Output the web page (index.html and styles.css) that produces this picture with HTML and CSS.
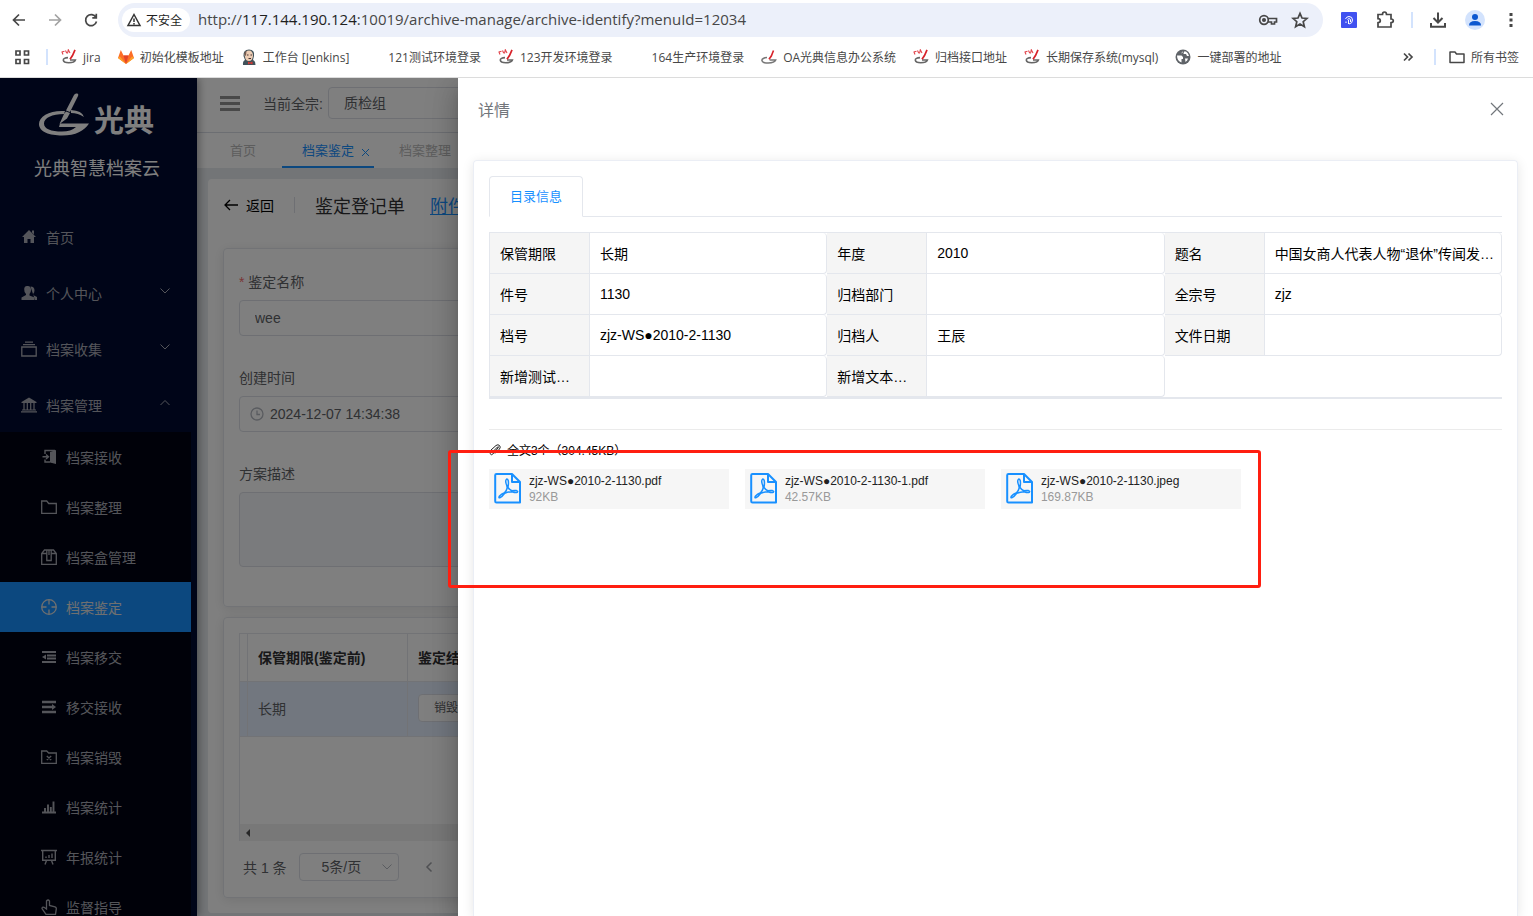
FILE: index.html
```html
<!DOCTYPE html>
<html lang="zh-CN">
<head>
    <meta charset="UTF-8">
    <title>光典智慧档案云</title>
    <link rel="stylesheet" href="styles.css">
</head>
<body>
    <svg class="sprite" aria-hidden="true">
        <symbol id="i-pen" viewBox="0 0 16 16">
            <path d="M6 8.6C3 8.8.8 9.8.9 11.3c.2 1.700 3 2.700 6.300 2.700 3.800 0 6.800-1.100 7.500-2.900H8.600" fill="none" stroke="#777" stroke-width="1.500"/>
            <path d="M12.500 1.500 10.300 7 8 10.300" fill="none" stroke="#d8222a" stroke-width="1.600"/>
        </symbol>
        <symbol id="i-pen2" viewBox="0 0 16 16">
            <path d="M7 8.600c-3 .2-4.800 1-4.700 2.500.2 1.600 2.500 2.600 5.500 2.600 3.500 0 6-1 6.600-2.700H9" fill="none" stroke="#666" stroke-width="1.600"/>
            <path d="M14 .8 11.500 6.500 9 10.300" fill="none" stroke="#d8222a" stroke-width="1.700"/>
            <path d="M.8 2.500 2 5.500M1 3l2.500-.8M4.500 1.500 5.800 4.300M6.500 4.500 7.300.8 9 4" fill="none" stroke="#e2444b" stroke-width="1.100"/>
        </symbol>
        <symbol id="i-pdf" viewBox="0 0 28 32">
            <path d="M2.500 1H18L26 9V29.500H2.500Q1.200 29.500 1.200 28.200V2.300Q1.200 1 2.500 1ZM18 1V9H26" fill="none" stroke="#1890ff" stroke-width="2" stroke-linejoin="round"/>
            <path d="M12.700 6q-1.700 1.200-.5 4.700.9 2.300 1 4.300-.6 2.800-2.700 4.800-3 1-5.200 3.500-.9 1.600.5 1.500 2.200-.8 4.900-4.500 3.800-1.600 7.600-1.600 3.200 1.300 5 .6 1-1.200-.8-1.700-2.200-.3-4.700.2-2.500-1-3.800-3.400.8-4.300.2-6.900-.5-1.600-1.500-1.500Z" fill="none" stroke="#1890ff" stroke-width="1.500" stroke-linejoin="round"/>
        </symbol>
        <symbol id="i-down" viewBox="0 0 12 12"><path d="M1.500 3.500 6 8l4.500-4.500" fill="none" stroke="currentColor"/></symbol>
        <symbol id="i-up" viewBox="0 0 12 12"><path d="M1.500 8 6 3.500 10.500 8" fill="none" stroke="currentColor"/></symbol>
    </svg>

    <header class="browser">
        <div class="toolbar">
            <button class="tool" aria-label="后退"><svg width="18" height="18" viewBox="0 0 18 18"><path d="M15 9H4M9 3.500 3.500 9 9 14.500"/></svg></button>
            <button class="tool tool-off" aria-label="前进"><svg width="18" height="18" viewBox="0 0 18 18"><path d="M3 9h11M9 3.500 14.500 9 9 14.500"/></svg></button>
            <button class="tool" aria-label="刷新"><svg width="18" height="18" viewBox="0 0 18 18"><path d="M14 6.500A5.500 5.500 0 1 0 14.500 10.500M14.300 2.800v4H10.300"/></svg></button>
            <div class="address">
                <button class="chip">
                    <svg width="16" height="16" viewBox="0 0 16 16"><path d="M8 2.500 14 13.500H2ZM8 6.500v3.500M8 11v1.500" fill="none" stroke="#333" stroke-width="1.500"/></svg>
                    不安全
                </button>
                <div class="url" role="textbox" aria-label="地址">http://<b>117.144.190.124</b>:10019/archive-manage/archive-identify?menuId=12034</div>
                <button class="tool" aria-label="密码"><svg width="20" height="18" viewBox="0 0 20 18"><circle cx="6" cy="9" r="4.300"/><circle cx="6" cy="9" r="1.200" fill="#474747"/><path d="M10 7.500h8.500v3.500h-2v2h-3v-2H10"/></svg></button>
                <button class="tool" aria-label="收藏"><svg width="18" height="18" viewBox="0 0 18 18"><path d="m9 2.300 2 4.700 5 .4-3.800 3.300 1.200 5L9 13l-4.400 2.700 1.200-5L2 7.400l5-.4Z"/></svg></button>
            </div>
            <button class="tool" aria-label="扩展应用"><svg width="16" height="16" viewBox="0 0 16 16"><rect width="16" height="16" rx="1" fill="#4051f0" stroke="none"/><path d="M4.500 7Q5.500 4.500 8 4.500 11.500 4.500 11.500 8T8 12M6.500 7.500Q8 5.500 9.500 7.500V10M7.500 8v4M5 9.500v1.500" stroke="#fff" stroke-width="1"/></svg></button>
            <button class="tool" aria-label="扩展程序"><svg width="20" height="20" viewBox="0 0 20 20"><path d="M3 4.500h4.500Q7.500 2 9.500 2t2 2.500H16V9q2.300 0 2.300 1.800T16 12.700V17H3v-4.300q2.300-.1 2.300-2T3 8.700Z"/></svg></button>
            <i class="bar"></i>
            <button class="tool" aria-label="下载"><svg width="18" height="18" viewBox="0 0 18 18"><path d="M9 1.500v9.500M4.500 7 9 11.500 13.500 7M2 12v3.700h14V12" stroke-width="2"/></svg></button>
            <button class="tool" aria-label="用户"><svg width="20" height="20" viewBox="0 0 20 20"><circle cx="10" cy="10" r="10" fill="#d3e3fd" stroke="none"/><circle cx="10" cy="7" r="3" fill="#0b57d0" stroke="none"/><path d="M4 15.500Q4 11 10 11t6 4.500Z" fill="#0b57d0" stroke="none"/></svg></button>
            <button class="tool tool-more" aria-label="菜单"><svg width="6" height="18" viewBox="0 0 6 18"><path d="M3 2v3M3 7.500v3M3 13v3" stroke-width="3"/></svg></button>
        </div>
        <nav class="bookmarks">
            <button class="tool" aria-label="应用"><svg width="16" height="16" viewBox="0 0 16 16"><path d="M2 2h4v4H2ZM10.500 2h4v4h-4ZM2 10.500h4v4H2ZM10.500 10.500h4v4h-4Z"/></svg></button>
            <i class="bar"></i>
            <a href="#"><svg class="fav"><use href="#i-pen2"/></svg>jira</a>
            <a href="#"><svg class="fav" viewBox="0 0 16 16"><path d="M0 9 2.800 1 5.500 6.500h5L13.200 1 16 9l-8 6Z" fill="#fc6d26"/><path d="M5.500 6.500h5L8 15Z" fill="#e24329"/><path d="m0 9 8 6L2 7.500ZM16 9l-8 6 6-7.500Z" fill="#fca326"/></svg>初始化模板地址</a>
            <a href="#"><svg class="fav" viewBox="0 0 16 16"><path d="M2 16q-.5-4 2-5L2.500 7Q2 .5 8 .5T13 7l-1 4q2.500 1 2.500 5Z" fill="#41525a"/><path d="M3.500 6Q4 1.500 8 1.500T12 7q-.5 5-4 5T4 8Z" fill="#edcdb4"/><path d="M3.500 6Q3 3 5.500 1.800L5 7Z" fill="#775c50"/><path d="M6 6h1.500M9.500 6H11M7.500 9.500H10" stroke="#433" fill="none"/><path d="m7 12.500 2 1 2.500-1v3l-2.500-1-2 1Z" fill="#d33833"/></svg>工作台 [Jenkins]</a>
            <a href="#"><svg class="fav"></svg>121测试环境登录</a>
            <a href="#"><svg class="fav"><use href="#i-pen2"/></svg>123开发环境登录</a>
            <a href="#"><svg class="fav"></svg>164生产环境登录</a>
            <a href="#"><svg class="fav"><use href="#i-pen"/></svg>OA光典信息办公系统</a>
            <a href="#"><svg class="fav"><use href="#i-pen2"/></svg>归档接口地址</a>
            <a href="#"><svg class="fav"><use href="#i-pen2"/></svg>长期保存系统(mysql)</a>
            <a href="#"><svg class="fav" viewBox="0 0 16 16"><circle cx="8" cy="8" r="7.500" fill="#5f6368"/><path d="M2 6.500h4.500L8 8v2H6.500v3.500Q2 12 2 6.500ZM8 2q0 2-2 2.500M9 2.500 8.500 5H11l1 2h2Q13.500 4 11 2.500ZM10 9.500h3q-.5 2-2.500 3.500Z" fill="#fff"/></svg>一键部署的地址</a>
            <span class="spacer"></span>
            <button class="tool tool-next" aria-label="更多书签"><svg width="12" height="12" viewBox="0 0 12 12"><path d="m2 2.500 3.500 3.500L2 9.500M6.500 2.500 10 6 6.500 9.500"/></svg></button>
            <i class="bar"></i>
            <a href="#"><svg class="fav" viewBox="0 0 16 16"><path d="M1 3h5l1.500 2H15v8.500H1Z" fill="none" stroke="#474747" stroke-width="1.500" stroke-linejoin="round"/></svg>所有书签</a>
        </nav>
    </header>

    <div class="app">
        <aside class="sidebar">
            <div class="logo">
                <svg width="52" height="44" viewBox="0 0 52 44"><path d="M27 18C12 17 1 23 1 31S12 42.500 24 42.500C38 42.500 46 38 51 30.500H22L21 34H38Q33 38.500 24 38.500C13 38.500 6 36 6 30.500 6 25 14 21 26 21ZM21.500 31 26 21l2-2.500 4 1.500-3 5.500ZM28 17.500 36 2q1-2 3-1.500T40 3L32 19ZM33 17q11 .5 13 7-6-4-13-4Z" fill="#fff"/></svg>
                <span>光典</span>
            </div>
            <h1>光典智慧档案云</h1>
            <nav class="menu">
                <a href="#"><svg viewBox="0 0 16 16"><path d="M8 1 15 8h-2v6H9.500v-4h-3v4H3V8H1ZM11 1.500h2v4l-2-2Z" fill="currentColor"/></svg>首页</a>
                <a href="#"><svg viewBox="0 0 16 16"><path d="M6 1q4-.5 4 4 0 2.500-1.500 4v1.500l5 2V15H.5v-2.500L5 10V9Q3 7 3.200 4T6 1Z" fill="currentColor"/><path d="M9.500 1.500q4 0 4 4 0 2-1.500 3.500v1L16 12v3h-2" fill="currentColor"/></svg>个人中心<svg class="arrow"><use href="#i-down"/></svg></a>
                <a href="#"><svg viewBox="0 0 16 16"><path d="M.800 6h14.400v9H.800ZM2 3.700h12M4 1.200h8" fill="none" stroke="currentColor" stroke-width="1.300"/></svg>档案收集<svg class="arrow"><use href="#i-down"/></svg></a>
                <a href="#"><svg viewBox="0 0 16 16"><path d="m8 .5 7.500 4.500V6H.5V5Z" fill="currentColor"/><path d="M3 6v7M6.300 6v7M9.700 6v7M13 6v7M1 13h14M0 14.800h16" fill="none" stroke="currentColor" stroke-width="1.200"/></svg>档案管理<svg class="arrow"><use href="#i-up"/></svg></a>
            </nav>
            <nav class="submenu">
                <a href="#"><svg viewBox="0 0 16 16"><path d="M9 3 15 1v14l-6-1.500Z" fill="currentColor"/><path d="M4 5V1.500h10M4 10.500V13h5M1.500 7.800H7M5 5.500l2.500 2.300L5 10" fill="none" stroke="currentColor" stroke-width="1.400"/></svg>档案接收</a>
                <a href="#"><svg viewBox="0 0 16 16"><path d="M.7 2h5l2 2.500h7.600v9.800H.7Z" fill="none" stroke="currentColor" stroke-width="1.300"/></svg>档案整理</a>
                <a href="#"><svg viewBox="0 0 16 16"><path d="M.7 15.300V4.500L3.500 1h9l2.800 3.500v10.800ZM1 4.500h4.500M10.500 4.500H15M5.800 1v10.500h4.400V1M8 1v5" fill="none" stroke="currentColor" stroke-width="1.300"/></svg>档案盒管理</a>
                <a class="active" href="#"><svg viewBox="0 0 16 16"><circle cx="8" cy="8" r="7.300" fill="none" stroke="currentColor" stroke-width="1.300"/><path d="M8 1v4.500M8 10.500V15M1 8h4.500M10.500 8H15" fill="none" stroke="currentColor" stroke-width="1.300"/></svg>档案鉴定</a>
                <a href="#"><svg viewBox="0 0 16 16"><path d="M1 3h14M6 6.500h9M6 9.500h9M1 13h14" fill="none" stroke="currentColor" stroke-width="2"/><path d="m1 8 4-2.500v5Z" fill="currentColor"/></svg>档案移交</a>
                <a href="#"><svg viewBox="0 0 16 16"><path d="M1 3h14M1 8h10M1 13h14" fill="none" stroke="currentColor" stroke-width="2.400"/><path d="m15 8-4-3v6Z" fill="currentColor"/></svg>移交接收</a>
                <a href="#"><svg viewBox="0 0 16 16"><path d="M.7 2h5l2 2h7.600v10.300H.7ZM5.800 7l4.400 4M10.200 7l-4.400 4" fill="none" stroke="currentColor" stroke-width="1.300"/></svg>档案销毁</a>
                <a href="#"><svg viewBox="0 0 16 16"><path d="M1 13.500h14M4 13V9M7 13V5.500M9.800 13V8M12.500 13V2.500" fill="none" stroke="currentColor" stroke-width="1.900"/></svg>档案统计</a>
                <a href="#"><svg viewBox="0 0 16 16"><path d="M0 1.500h16M1.700 1.500v9.800h12.600V1.500M5.500 11.500l-1.500 4M10.500 11.500l1.500 4M5 9V7.500M8 9V6M11 9V4.500" fill="none" stroke="currentColor" stroke-width="1.400"/></svg>年报统计</a>
                <a href="#"><svg viewBox="0 0 16 16"><path d="M5 15.300 1 9.500q0-2 2-1.200L5.500 10V2q1.600-2 3 0v4.500l5.500 1.300q1.500.5 1.300 2l-.8 5.500Z" fill="none" stroke="currentColor" stroke-width="1.300"/></svg>监督指导</a>
            </nav>
        </aside>

        <main class="main">
            <div class="topbar">
                <button class="burger" aria-label="折叠菜单"><i></i><i></i><i></i></button>
                <label for="fonds">当前全宗:</label>
                <select id="fonds"><option>质检组</option></select>
            </div>
            <div class="page-tabs">
                <a href="#">首页</a>
                <a class="active" href="#">档案鉴定<svg width="9" height="9" viewBox="0 0 9 9"><path d="m1 1 7 7M8 1 1 8" fill="none" stroke="currentColor"/></svg></a>
                <a href="#">档案整理</a>
            </div>
            <section class="page">
                <div class="page-head">
                    <button class="back"><svg width="16" height="14" viewBox="0 0 16 14"><path d="M15 7H2M7 2 2 7l5 5" fill="none" stroke="#000" stroke-width="1.300"/></svg>返回</button>
                    <i></i>
                    <h2>鉴定登记单</h2>
                    <a href="#">附件</a>
                </div>
                <form class="panel form">
                    <label for="name"><em>*</em> 鉴定名称</label>
                    <input id="name" type="text" value="wee">
                    <label for="time">创建时间</label>
                    <div class="date">
                        <svg width="14" height="14" viewBox="0 0 14 14"><circle cx="7" cy="7" r="6"/><path d="M7 3.500V7.500h3"/></svg>
                        <input id="time" type="text" value="2024-12-07 14:34:38">
                    </div>
                    <label for="desc">方案描述</label>
                    <textarea id="desc" disabled></textarea>
                </form>
                <div class="panel">
                    <div class="grid-box">
                        <table class="grid">
                            <tr><th class="thin"></th><th class="term">保管期限(鉴定前)</th><th>鉴定结果</th></tr>
                            <tr><td></td><td>长期</td><td><select aria-label="鉴定结果"><option>销毁</option></select></td></tr>
                        </table>
                        <div class="scroll"><svg width="6" height="8" viewBox="0 0 6 8"><path d="M5 0v8L1 4Z" fill="#505050"/></svg></div>
                    </div>
                    <div class="pager">
                        <span>共 1 条</span>
                        <span class="size"><select aria-label="每页条数"><option>5条/页</option></select><svg width="12" height="12"><use href="#i-down"/></svg></span>
                        <button aria-label="上一页"><svg width="8" height="12" viewBox="0 0 8 12"><path d="M6.500 1.500 2 6l4.500 4.500" fill="none" stroke="#a0a2a8" stroke-width="1.500"/></svg></button>
                    </div>
                </div>
            </section>
        </main>

        <div class="mask"></div>

        <section class="drawer">
            <header>
                <span>详情</span>
                <button aria-label="关闭"><svg width="14" height="14" viewBox="0 0 14 14"><path d="m1 1 12 12M13 1 1 13" fill="none" stroke="#72767b" stroke-width="1.200"/></svg></button>
            </header>
            <div class="card">
                <div class="card-tabs"><button>目录信息</button></div>
                <table class="info">
                    <colgroup><col class="key"><col><col class="key"><col><col class="key"><col></colgroup>
                    <tr><th>保管期限</th><td>长期</td><th>年度</th><td>2010</td><th>题名</th><td>中国女商人代表人物“退休”传闻发…</td></tr>
                    <tr><th>件号</th><td>1130</td><th>归档部门</th><td></td><th>全宗号</th><td>zjz</td></tr>
                    <tr><th>档号</th><td>zjz-WS●2010-2-1130</td><th>归档人</th><td>王辰</td><th>文件日期</th><td></td></tr>
                    <tr><th>新增测试…</th><td></td><th>新增文本…</th><td></td></tr>
                </table>
                <div class="files-title">
                    <svg width="12" height="12" viewBox="0 0 12 12"><path d="M2.500 9 8.500 3q1.500-1 .5 1L4.500 9.500Q2 12 1 9.500T2 6L7 1.500Q9 0 10.500 1.500T10.500 5L6 9.500" fill="none" stroke="#222"/></svg>
                    全文3个（304.45KB）
                </div>
                <div class="files">
                    <a href="#"><svg width="28" height="32"><use href="#i-pdf"/></svg><span>zjz-WS●2010-2-1130.pdf<small>92KB</small></span></a>
                    <a href="#"><svg width="28" height="32"><use href="#i-pdf"/></svg><span>zjz-WS●2010-2-1130-1.pdf<small>42.57KB</small></span></a>
                    <a href="#"><svg width="28" height="32"><use href="#i-pdf"/></svg><span>zjz-WS●2010-2-1130.jpeg<small>169.87KB</small></span></a>
                </div>
            </div>
        </section>

        <div class="marker"></div>
    </div>
</body>
</html>
```
FILE: styles.css
```css
* {
    box-sizing: border-box;
}

body {
    margin: 0;
    height: 100vh;
    display: flex;
    flex-direction: column;
    overflow: hidden;
    font-family: "Liberation Sans", "Noto Sans CJK SC", sans-serif;
    font-size: 14px;
    color: #606266;
}

a {
    color: inherit;
    text-decoration: none;
}

button {
    border: none;
    background: none;
    padding: 0;
    font: inherit;
    color: inherit;
    display: flex;
    align-items: center;
}

input, select, textarea {
    font: inherit;
    color: #606266;
    background: #fff;
    border: 1px solid #dcdfe6;
    border-radius: 4px;
    padding: 0 15px;
    appearance: none;
}

svg {
    flex: none;
}

.sprite {
    position: absolute;
    width: 0;
    height: 0;
}

/* browser */
.browser {
    flex: none;
    height: 78px;
    background: #fff;
    border-bottom: 1px solid #dcdcdc;
    font-family: "Open Sans", "Noto Sans CJK SC", sans-serif;
    color: #474747;
}

.toolbar {
    display: flex;
    align-items: center;
    height: 40px;
    gap: 18px;
    padding: 0 19px 0 10px;
}

.toolbar .bar {
    margin: 0 -2px;
}

.tool svg {
    fill: none;
    stroke: #474747;
    stroke-width: 1.7;
}

.tool-off {
    opacity: 0.5;
}

.tool-more {
    margin-left: 5px;
}

.tool-next {
    margin-right: 4px;
}

.address {
    flex: 1;
    display: flex;
    align-items: center;
    height: 34px;
    padding: 0 14px 0 4px;
    border-radius: 17px;
    background: #ecf0fa;
    gap: 13px;
}

.chip {
    height: 24px;
    padding: 0 8px 0 4px;
    gap: 4px;
    border-radius: 12px;
    background: #fff;
    font-size: 12px;
    color: #1f1f1f;
}

.url {
    flex: 1;
    margin-left: -5px;
    padding-bottom: 2px;
    font-size: 15px;
    white-space: nowrap;
}

.url b {
    font-weight: normal;
    color: #1f1f1f;
}

.bar {
    width: 2px;
    height: 16px;
    background: #d3e3fd;
}

.bookmarks {
    display: flex;
    align-items: center;
    height: 34px;
    gap: 17px;
    padding: 0 14px;
    font-size: 12px;
    white-space: nowrap;
}

.bookmarks > .bar {
    margin: 0 -4px 0 -1px;
}

.bookmarks a {
    display: flex;
    align-items: center;
    gap: 6px;
}

.fav {
    width: 16px;
    height: 16px;
}

.spacer {
    flex: 1;
}

/* app */
.app {
    flex: 1;
    display: flex;
    min-height: 0;
    position: relative;
    overflow: hidden;
}

.sidebar {
    flex: none;
    width: 197px;
    background: #000a30;
    color: #a9abb4;
    box-shadow: 2px 0 8px rgba(0, 0, 0, 0.35);
    z-index: 1;
}

.logo {
    display: flex;
    align-items: center;
    gap: 4px;
    height: 74px;
    padding-left: 38px;
    color: #fff;
    font-size: 30px;
    font-weight: bold;
}

.logo span {
    padding-top: 6px;
}

.sidebar h1 {
    margin: 0 0 22px;
    padding-right: 3px;
    font-size: 18px;
    font-weight: normal;
    line-height: 35px;
    text-align: center;
    color: #fff;
}

.menu a, .submenu a {
    display: flex;
    align-items: center;
    gap: 9px;
    height: 56px;
    padding: 0 26px 0 21px;
}

.menu svg, .submenu svg {
    width: 16px;
    height: 16px;
}

.menu .arrow {
    width: 12px;
    height: 12px;
    margin: 0 0 4px auto;
}

.submenu {
    width: 191px;
    margin-top: -1px;
    background: #000212;
}

.submenu a {
    height: 50px;
    padding-left: 41px;
}

.submenu .active {
    background: #1890ff;
    color: #e0e0e0;
}

.main {
    flex: 1;
    min-width: 0;
    background: #e7ebef;
}

.topbar {
    display: flex;
    align-items: center;
    height: 55px;
    padding: 0 23px 4px;
    background: #fff;
    border-bottom: 1px solid #d8dce5;
}

.topbar select {
    width: 200px;
    height: 32px;
    margin-left: 5px;
}

.burger {
    display: grid;
    gap: 3px;
    width: 20px;
    margin-right: 23px;
}

.burger i {
    height: 3px;
    background: #909090;
}

.page-tabs {
    display: flex;
    height: 35px;
    padding-left: 13px;
    background: #fff;
    font-size: 13px;
    color: #bbb;
}

.page-tabs a {
    display: flex;
    align-items: center;
    gap: 7px;
    padding: 0 20px 2px;
}

.page-tabs .active {
    margin: 0 5px 0 6px;
    padding: 0 4px 0 20px;
    border-bottom: 2px solid #1890ff;
    color: #1890ff;
}

.page-tabs svg {
    margin-top: 6px;
}

.page {
    margin: 11px 15px 0 11px;
    padding: 0 15px 15px;
    background: #fff;
    border-radius: 4px;
}

.page-head {
    display: flex;
    align-items: center;
    height: 69px;
    padding-bottom: 17px;
    font-size: 18px;
}

.back {
    gap: 7px;
    font-size: 14px;
    color: #000;
}

.page-head i {
    width: 1px;
    height: 16px;
    margin: 0 20px;
    background: #dcdfe6;
}

.page-head h2 {
    margin: 0 25px 0 0;
    font-size: 18px;
    font-weight: normal;
    color: #303133;
}

.page-head a {
    color: #1890ff;
    text-decoration: underline;
}

.panel {
    margin-bottom: 10px;
    padding: 15px;
    border: 1px solid #e4e7ed;
    border-radius: 4px;
    box-shadow: 0 2px 12px rgba(0, 0, 0, 0.1);
}

.panel:last-child {
    margin-bottom: 0;
}

.form {
    display: flex;
    flex-direction: column;
    padding-bottom: 39px;
}

.form label {
    padding: 8px 0;
    line-height: 20px;
    height: 36px;
}

.form em {
    font-style: normal;
    color: #f56c6c;
}

.form input {
    width: 100%;
    height: 36px;
    margin-bottom: 24px;
}

.date {
    position: relative;
    display: flex;
}

.date input {
    padding-left: 30px;
}

.date svg {
    position: absolute;
    left: 11px;
    top: 11px;
    fill: none;
    stroke: #b4b8c0;
    stroke-width: 1.3;
}

.form textarea {
    height: 75px;
    background: #f5f7fa;
    resize: none;
}

.grid-box {
    height: 208px;
    border-left: 1px solid #e4e7ed;
    display: flex;
    flex-direction: column;
}

.grid {
    width: 100%;
    table-layout: fixed;
    border-spacing: 0;
    border-top: 1px solid #e4e7ed;
}

.grid th, .grid td {
    height: 48px;
    padding: 0 10px 2px;
    text-align: left;
    border-right: 1px solid #e4e7ed;
    border-bottom: 1px solid #e4e7ed;
}

.grid th {
    color: #303133;
}

.grid td {
    height: 55px;
    background: #e4efff;
}

.grid .thin {
    width: 8px;
    padding: 0;
}

.grid .term {
    width: 160px;
}

.grid select {
    width: 120px;
    height: 28px;
    font-size: 12px;
}

.scroll {
    display: flex;
    align-items: center;
    height: 17px;
    margin-top: auto;
    padding-left: 5px;
    background: #f1f1f1;
}

.pager {
    display: flex;
    align-items: center;
    padding: 12px 4px 1px;
}

.size {
    position: relative;
    margin: 0 26px 0 12px;
}

.size select {
    display: block;
    width: 100px;
    height: 28px;
    padding: 0 22px;
}

.size svg {
    position: absolute;
    right: 6px;
    top: 8px;
    color: #b4b8c0;
}

.mask {
    position: absolute;
    inset: 0;
    z-index: 2;
    background: rgba(0, 0, 0, 0.5);
}

/* drawer */
.drawer {
    position: absolute;
    top: 0;
    right: 0;
    bottom: 0;
    z-index: 3;
    width: calc(70% + 2px);
    display: flex;
    flex-direction: column;
    padding: 0 15px;
    background: #fff;
    box-shadow: 0 8px 10px -5px rgba(0, 0, 0, 0.2), 0 16px 24px 2px rgba(0, 0, 0, 0.14), 0 6px 30px 5px rgba(0, 0, 0, 0.12);
}

.drawer header {
    display: flex;
    align-items: center;
    justify-content: space-between;
    height: 82px;
    padding: 0 14px 20px 5px;
    font-size: 16px;
    color: #72767b;
}

.card {
    flex: 1;
    padding: 15px 15px 0;
    border: 1px solid #ebeef5;
    border-bottom: none;
    border-radius: 4px 4px 0 0;
    box-shadow: 0 2px 12px rgba(0, 0, 0, 0.1);
}

.card-tabs {
    border-bottom: 1px solid #e4e7ed;
    margin-bottom: 15px;
}

.card-tabs button {
    height: 41px;
    margin-bottom: -1px;
    padding: 0 20px 2px;
    border: 1px solid #e4e7ed;
    border-bottom-color: #fff;
    border-radius: 4px 4px 0 0;
    background: #fff;
    font-size: 13px;
    color: #1890ff;
}

.info {
    width: 100%;
    table-layout: fixed;
    border-spacing: 0;
    border-top: 1px solid #e4e7ed;
    border-left: 1px solid #e4e7ed;
    border-bottom: 2px solid #e4e7ed;
    color: #000;
}

.info .key {
    width: 100px;
}

.info th, .info td {
    height: 41px;
    padding: 0 10px 1px;
    border-right: 1px solid #e4e7ed;
    border-bottom: 1px solid #e4e7ed;
    font-weight: normal;
    text-align: left;
    white-space: nowrap;
}

.info th {
    background: #f5f5f5;
}

.info td {
    border-radius: 0 4px 4px 0;
}

.files-title {
    display: flex;
    align-items: center;
    gap: 6px;
    height: 40px;
    margin-top: 30px;
    border-top: 1px solid #ebebeb;
    font-size: 12px;
    color: #000;
}

.files {
    display: flex;
    gap: 16px;
}

.files a {
    display: flex;
    align-items: center;
    gap: 7px;
    width: 240px;
    height: 40px;
    padding: 0 5px;
    background: #f6f6f6;
    font-size: 12px;
    line-height: 16px;
    color: #222;
}

.files small {
    display: block;
    font-size: 12px;
    color: #999;
}

.marker {
    position: absolute;
    left: 448px;
    top: 372px;
    z-index: 4;
    width: 813px;
    height: 138px;
    border: 3px solid #ff1e10;
    border-radius: 3px;
}
```
